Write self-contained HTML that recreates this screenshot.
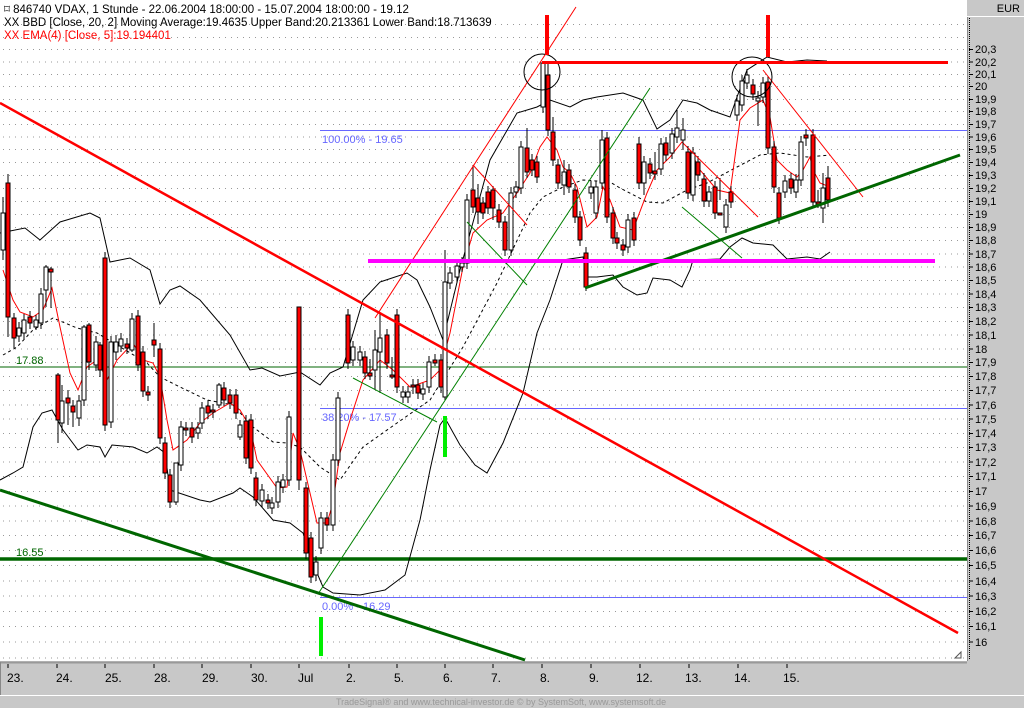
<!DOCTYPE html>
<html><head><meta charset="utf-8"><style>
html,body{margin:0;padding:0;background:#fff;}
body{width:1024px;height:708px;overflow:hidden;position:relative;font-family:"Liberation Sans",Arial,sans-serif;}
svg{position:absolute;left:0;top:0;}
text{font-family:"Liberation Sans",Arial,sans-serif;}
</style></head><body>
<svg width="1024" height="708" viewBox="0 0 1024 708">
<rect x="0" y="0" width="1024" height="708" fill="#fff"/>
<!-- right axis bg -->
<rect x="967" y="0" width="57" height="662" fill="#c8c8c8"/>
<line x1="967.5" y1="0" x2="967.5" y2="662" stroke="#888" stroke-width="1"/>
<rect x="967" y="0" width="57" height="16" fill="#c8c8c8"/>
<line x1="967" y1="16.5" x2="1024" y2="16.5" stroke="#fff"/>
<text x="1020" y="12" font-size="11" text-anchor="end" fill="#000">EUR</text>
<line x1="969.5" y1="18" x2="969.5" y2="660" stroke="#000" stroke-dasharray="1,1"/>
<!-- grid -->
<g stroke="#999" stroke-width="1" stroke-dasharray="1,5">
<line x1="3" y1="24.5" x2="967" y2="24.5"/><line x1="3" y1="37.5" x2="967" y2="37.5"/>
<line x1="3" y1="49.5" x2="967" y2="49.5"/><line x1="3" y1="62" x2="967" y2="62"/><line x1="3" y1="74.5" x2="967" y2="74.5"/><line x1="3" y1="86.5" x2="967" y2="86.5"/><line x1="3" y1="99.5" x2="967" y2="99.5"/><line x1="3" y1="111.5" x2="967" y2="111.5"/><line x1="3" y1="124.5" x2="967" y2="124.5"/><line x1="3" y1="137" x2="967" y2="137"/><line x1="3" y1="149.5" x2="967" y2="149.5"/><line x1="3" y1="162.5" x2="967" y2="162.5"/><line x1="3" y1="175.5" x2="967" y2="175.5"/><line x1="3" y1="188.5" x2="967" y2="188.5"/><line x1="3" y1="201.5" x2="967" y2="201.5"/><line x1="3" y1="214.5" x2="967" y2="214.5"/><line x1="3" y1="227.5" x2="967" y2="227.5"/><line x1="3" y1="240.5" x2="967" y2="240.5"/><line x1="3" y1="254" x2="967" y2="254"/><line x1="3" y1="267" x2="967" y2="267"/><line x1="3" y1="280.5" x2="967" y2="280.5"/><line x1="3" y1="294" x2="967" y2="294"/><line x1="3" y1="307.5" x2="967" y2="307.5"/><line x1="3" y1="321.5" x2="967" y2="321.5"/><line x1="3" y1="335" x2="967" y2="335"/><line x1="3" y1="349" x2="967" y2="349"/><line x1="3" y1="362.5" x2="967" y2="362.5"/><line x1="3" y1="376.5" x2="967" y2="376.5"/><line x1="3" y1="390.5" x2="967" y2="390.5"/><line x1="3" y1="405" x2="967" y2="405"/><line x1="3" y1="419" x2="967" y2="419"/><line x1="3" y1="433.5" x2="967" y2="433.5"/><line x1="3" y1="447.5" x2="967" y2="447.5"/><line x1="3" y1="462" x2="967" y2="462"/><line x1="3" y1="476.5" x2="967" y2="476.5"/><line x1="3" y1="491.5" x2="967" y2="491.5"/><line x1="3" y1="506" x2="967" y2="506"/><line x1="3" y1="521" x2="967" y2="521"/><line x1="3" y1="535.5" x2="967" y2="535.5"/><line x1="3" y1="550.5" x2="967" y2="550.5"/><line x1="3" y1="565.5" x2="967" y2="565.5"/><line x1="3" y1="581" x2="967" y2="581"/><line x1="3" y1="596" x2="967" y2="596"/><line x1="3" y1="611.5" x2="967" y2="611.5"/><line x1="3" y1="626.5" x2="967" y2="626.5"/><line x1="3" y1="642" x2="967" y2="642"/><line x1="3" y1="658" x2="967" y2="658"/>
</g>
<!-- axis labels -->
<g font-size="11" fill="#000">
<g stroke="#000"><line x1="969" y1="49.5" x2="973" y2="49.5"/><line x1="969" y1="62" x2="973" y2="62"/><line x1="969" y1="74.5" x2="973" y2="74.5"/><line x1="969" y1="86.5" x2="973" y2="86.5"/><line x1="969" y1="99.5" x2="973" y2="99.5"/><line x1="969" y1="111.5" x2="973" y2="111.5"/><line x1="969" y1="124.5" x2="973" y2="124.5"/><line x1="969" y1="137" x2="973" y2="137"/><line x1="969" y1="149.5" x2="973" y2="149.5"/><line x1="969" y1="162.5" x2="973" y2="162.5"/><line x1="969" y1="175.5" x2="973" y2="175.5"/><line x1="969" y1="188.5" x2="973" y2="188.5"/><line x1="969" y1="201.5" x2="973" y2="201.5"/><line x1="969" y1="214.5" x2="973" y2="214.5"/><line x1="969" y1="227.5" x2="973" y2="227.5"/><line x1="969" y1="240.5" x2="973" y2="240.5"/><line x1="969" y1="254" x2="973" y2="254"/><line x1="969" y1="267" x2="973" y2="267"/><line x1="969" y1="280.5" x2="973" y2="280.5"/><line x1="969" y1="294" x2="973" y2="294"/><line x1="969" y1="307.5" x2="973" y2="307.5"/><line x1="969" y1="321.5" x2="973" y2="321.5"/><line x1="969" y1="335" x2="973" y2="335"/><line x1="969" y1="349" x2="973" y2="349"/><line x1="969" y1="362.5" x2="973" y2="362.5"/><line x1="969" y1="376.5" x2="973" y2="376.5"/><line x1="969" y1="390.5" x2="973" y2="390.5"/><line x1="969" y1="405" x2="973" y2="405"/><line x1="969" y1="419" x2="973" y2="419"/><line x1="969" y1="433.5" x2="973" y2="433.5"/><line x1="969" y1="447.5" x2="973" y2="447.5"/><line x1="969" y1="462" x2="973" y2="462"/><line x1="969" y1="476.5" x2="973" y2="476.5"/><line x1="969" y1="491.5" x2="973" y2="491.5"/><line x1="969" y1="506" x2="973" y2="506"/><line x1="969" y1="521" x2="973" y2="521"/><line x1="969" y1="535.5" x2="973" y2="535.5"/><line x1="969" y1="550.5" x2="973" y2="550.5"/><line x1="969" y1="565.5" x2="973" y2="565.5"/><line x1="969" y1="581" x2="973" y2="581"/><line x1="969" y1="596" x2="973" y2="596"/><line x1="969" y1="611.5" x2="973" y2="611.5"/><line x1="969" y1="626.5" x2="973" y2="626.5"/><line x1="969" y1="642" x2="973" y2="642"/></g>
<text x="975" y="53">20,3</text><text x="975" y="66">20,2</text><text x="975" y="78">20,1</text><text x="975" y="90">20</text><text x="975" y="103">19,9</text><text x="975" y="115">19,8</text><text x="975" y="128">19,7</text><text x="975" y="141">19,6</text><text x="975" y="153">19,5</text><text x="975" y="166">19,4</text><text x="975" y="179">19,3</text><text x="975" y="192">19,2</text><text x="975" y="205">19,1</text><text x="975" y="218">19</text><text x="975" y="231">18,9</text><text x="975" y="244">18,8</text><text x="975" y="258">18,7</text><text x="975" y="271">18,6</text><text x="975" y="284">18,5</text><text x="975" y="298">18,4</text><text x="975" y="311">18,3</text><text x="975" y="325">18,2</text><text x="975" y="339">18,1</text><text x="975" y="353">18</text><text x="975" y="366">17,9</text><text x="975" y="380">17,8</text><text x="975" y="394">17,7</text><text x="975" y="409">17,6</text><text x="975" y="423">17,5</text><text x="975" y="437">17,4</text><text x="975" y="451">17,3</text><text x="975" y="466">17,2</text><text x="975" y="480">17,1</text><text x="975" y="495">17</text><text x="975" y="510">16,9</text><text x="975" y="525">16,8</text><text x="975" y="539">16,7</text><text x="975" y="554">16,6</text><text x="975" y="569">16,5</text><text x="975" y="585">16,4</text><text x="975" y="600">16,3</text><text x="975" y="615">16,2</text><text x="975" y="630">16,1</text><text x="975" y="646">16</text>
</g>
<!-- bottom axis -->
<rect x="0" y="661" width="967" height="34" fill="#c8c8c8"/>
<rect x="967" y="661" width="57" height="34" fill="#c8c8c8"/>
<line x1="0" y1="662.5" x2="967" y2="662.5" stroke="#999" stroke-width="2"/>
<line x1="0.5" y1="662" x2="0.5" y2="695" stroke="#888"/>
<line x1="0" y1="695.5" x2="1024" y2="695.5" stroke="#fff"/>
<rect x="0" y="696" width="1024" height="12" fill="#c8c8c8"/>
<path d="M955 658L961 652V658Z" fill="#fff" stroke="#555"/>
<g stroke="#000"><path d="M8 664V668M57 664V668M105 664V668M154 664V668M202 664V668M251 664V668M299 664V668M349 664V668M397 664V668M445 664V668M493 664V668M542 664V668M591 664V668M640 664V668M689 664V668M738 664V668M787 664V668"/></g>
<g font-size="12" fill="#000">
<text x="7" y="682">23.</text><text x="56" y="682">24.</text><text x="105" y="682">25.</text><text x="154" y="682">28.</text><text x="202" y="682">29.</text><text x="251" y="682">30.</text><text x="298" y="682">Jul</text><text x="346" y="682">2.</text><text x="394" y="682">5.</text><text x="443" y="682">6.</text><text x="491" y="682">7.</text><text x="540" y="682">8.</text><text x="589" y="682">9.</text><text x="636" y="682">12.</text><text x="685" y="682">13.</text><text x="734" y="682">14.</text><text x="783" y="682">15.</text>
</g>
<text x="336" y="705" font-size="9" fill="#999">TradeSignal® and www.technical-investor.de © by  SystemSoft, www.systemsoft.de</text>

<!-- horizontal reference lines -->
<line x1="0" y1="367" x2="967" y2="367" stroke="#006600" stroke-width="1"/>
<line x1="0" y1="559" x2="967" y2="559" stroke="#006600" stroke-width="3.5"/>
<line x1="320" y1="130.5" x2="967" y2="130.5" stroke="#6666ff" stroke-width="1"/>
<line x1="320" y1="408.5" x2="967" y2="408.5" stroke="#6666ff" stroke-width="1"/>
<line x1="320" y1="597.5" x2="967" y2="597.5" stroke="#6666ff" stroke-width="1"/>
<g font-size="11" fill="#6666ff">
<text x="322" y="143">100.00% - 19.65</text>
<text x="322" y="421">38.20% - 17.57</text>
<text x="322" y="610">0.00% - 16.29</text>
</g>
<g font-size="11" fill="#006600"><text x="16" y="364">17.88</text><text x="16" y="556">16.55</text></g>

<!-- bollinger bands -->
<g fill="none" stroke="#000" stroke-width="1">
<polyline points="0,233 25,228 40,240 60,222 90,213 100,218 110,262 130,258 150,270 160,304 170,290 180,286 200,300 230,335 250,370 262,368 280,376 300,372 320,385 330,373 343,367 363,300 380,282 407,273 417,280 430,307 443,340 460,270 475,215 490,160 517,113 537,107 550,100 570,107 583,100 597,97 623,93 643,100 657,129 670,120 683,100 697,103 710,110 730,117 737,97 747,70 767,57 787,62 807,60 827,61"/>
<polyline points="0,480 13,473 23,467 33,427 42,413 52,410 63,430 78,450 87,445 100,447 105,457 112,445 133,447 147,453 157,447 165,453 170,490 200,500 210,502 233,493 240,488 253,497 267,513 273,520 290,523 303,533 317,573 323,587 333,593 360,595 385,590 405,575 420,520 430,470 440,425 445,418 460,445 475,465 487,473 503,443 523,393 537,333 550,300 563,260 583,257 587,277 597,277 613,275 623,287 637,295 647,293 653,278 670,280 682,287 690,270 693,260 720,259 730,247 742,238 753,243 773,245 787,259 807,257 820,259 830,252"/>
<polyline stroke-dasharray="3,3" points="3,355 17,347 33,330 53,318 77,328 97,333 147,363 160,377 180,387 207,400 233,405 253,427 273,442 287,443 300,447 320,467 340,480 363,447 397,423 430,400 463,347 497,283 530,213 543,197 563,187 583,180 610,182 620,188 647,202 663,203 687,190 707,183 737,167 760,155 780,153 807,157 830,155"/>
</g>
<!-- EMA -->
<polyline fill="none" stroke="#ff0000" stroke-width="1" points="3,270 13,300 20,312 33,317 43,310 52,288 60,327 70,373 78,390 87,367 97,360 107,380 117,360 133,343 143,360 153,363 160,377 167,420 173,450 187,440 200,423 213,413 230,403 240,410 250,427 257,460 277,488 287,487 293,433 300,450 310,493 317,523 327,523 333,503 340,453 350,420 363,380 380,360 393,370 410,387 430,380 440,370 450,333 463,267 473,233 487,220 503,213 517,193 530,173 540,147 547,137 557,150 563,167 570,173 577,187 587,227 597,217 603,187 610,200 620,227 633,230 647,193 657,170 670,157 682,142 690,150 700,170 717,190 730,193 740,120 750,108 763,100 770,117 777,160 787,170 797,177 803,170 810,157 813,170 820,183 830,187"/>

<!-- candles wicks -->
<path fill="none" stroke="#000" stroke-width="1" d="M3 197V260M8 174V337M14 313V348M19 322V342M24 314V339M30 311V329M36 315V330M41 288V329M46 265V307M51 267V308M58 373V443M62 385V433M68 390V425M73 400V427M79 395V426M84 325V406M89 323V370M96 336V371M100 342V377M105 252V431M111 336V428M116 335V360M121 333V352M127 338V354M132 313V352M138 310V371M143 346V397M148 386V401M154 323V357M160 343V444M165 437V479M170 469V508M176 463V505M181 421V471M186 422V436M192 422V443M198 422V439M202 402V429M208 400V419M213 404V418M219 383V408M224 382V406M230 389V409M236 389V419M240 420V440M246 415V464M251 414V474M256 472V506M262 484V507M268 494V509M272 497V514M278 476V508M283 474V493M289 411V486M299 307V490M306 482V559M311 532V583M316 556V581M321 512V554M327 512V531M333 454V531M338 392V466M348 309V369M353 341V366M360 346V366M365 351V379M370 359V380M375 330V390M380 313V393M387 329V369M392 357V379M397 309V393M403 386V403M408 386V403M413 379V394M418 379V399M423 383V400M429 356V393M435 354V366M441 354V393M445 250V400M450 267V289M457 260V283M462 257V272M467 194V269M473 165V213M478 184V224M483 197V219M488 186V214M493 186V220M499 204V228M505 216V256M511 187V256M516 181V198M521 141V194M527 128V178M532 154V176M537 156V183M543 63V113M548 63V136M553 117V166M558 159V189M564 160V195M569 164V193M575 184V223M580 211V246M586 247V291M591 181V199M596 181V219M602 130V189M607 132V223M613 207V244M617 232V249M623 239V256M628 214V253M634 212V246M639 137V189M644 156V195M650 158V179M655 152V180M661 138V175M666 137V161M672 128V159M677 110V143M683 118V150M688 146V199M693 147V201M698 156V181M704 173V207M709 186V207M715 181V219M720 178V200M726 199V233M731 186V208M737 95V121M742 75V111M747 69V89M753 79V100M758 91V126M763 77V103M768 76V154M774 141V193M779 187V224M785 175V198M791 173V194M796 174V198M801 136V186M806 129V146M813 129V208M818 190V208M823 173V223M828 166V207"/>
<!-- red bodies -->
<g fill="#ff0000" stroke="#000" stroke-width="1">
<rect x="6" y="183" width="4" height="134"/><rect x="12" y="318" width="4" height="20"/><rect x="28" y="317" width="4" height="6"/><rect x="49" y="269" width="4" height="3"/><rect x="56" y="375" width="4" height="45"/><rect x="66" y="398" width="4" height="5"/><rect x="71" y="406" width="4" height="6"/><rect x="87" y="325" width="4" height="37"/><rect x="98" y="345" width="4" height="25"/><rect x="103" y="258" width="4" height="167"/><rect x="125" y="344" width="4" height="4"/><rect x="136" y="316" width="4" height="49"/><rect x="141" y="352" width="4" height="39"/><rect x="146" y="392" width="4" height="3"/><rect x="152" y="340" width="4" height="5"/><rect x="158" y="349" width="4" height="89"/><rect x="163" y="443" width="4" height="30"/><rect x="168" y="475" width="4" height="27"/><rect x="184" y="428" width="4" height="2"/><rect x="190" y="428" width="4" height="9"/><rect x="206" y="406" width="4" height="7"/><rect x="211" y="410" width="4" height="2"/><rect x="222" y="388" width="4" height="12"/><rect x="228" y="395" width="4" height="8"/><rect x="234" y="395" width="4" height="18"/><rect x="244" y="421" width="4" height="37"/><rect x="249" y="420" width="4" height="48"/><rect x="254" y="478" width="4" height="22"/><rect x="266" y="500" width="4" height="3"/><rect x="297" y="307" width="4" height="173"/><rect x="304" y="488" width="4" height="65"/><rect x="309" y="538" width="4" height="39"/><rect x="325" y="518" width="4" height="7"/><rect x="346" y="315" width="4" height="48"/><rect x="363" y="357" width="4" height="16"/><rect x="368" y="373" width="4" height="3"/><rect x="385" y="335" width="4" height="28"/><rect x="390" y="375" width="4" height="2"/><rect x="395" y="315" width="4" height="72"/><rect x="411" y="385" width="4" height="2"/><rect x="416" y="385" width="4" height="8"/><rect x="433" y="360" width="4" height="3"/><rect x="439" y="360" width="4" height="27"/><rect x="471" y="190" width="4" height="17"/><rect x="476" y="198" width="4" height="14"/><rect x="481" y="203" width="4" height="10"/><rect x="486" y="192" width="4" height="16"/><rect x="491" y="190" width="4" height="18"/><rect x="497" y="210" width="4" height="12"/><rect x="503" y="222" width="4" height="28"/><rect x="525" y="148" width="4" height="24"/><rect x="530" y="160" width="4" height="10"/><rect x="535" y="162" width="4" height="15"/><rect x="546" y="75" width="4" height="55"/><rect x="551" y="132" width="4" height="28"/><rect x="556" y="165" width="4" height="18"/><rect x="567" y="170" width="4" height="17"/><rect x="573" y="190" width="4" height="27"/><rect x="578" y="217" width="4" height="23"/><rect x="584" y="253" width="4" height="34"/><rect x="605" y="138" width="4" height="79"/><rect x="611" y="213" width="4" height="25"/><rect x="615" y="238" width="4" height="5"/><rect x="621" y="245" width="4" height="5"/><rect x="632" y="218" width="4" height="22"/><rect x="637" y="144" width="4" height="39"/><rect x="648" y="164" width="4" height="9"/><rect x="653" y="171" width="4" height="3"/><rect x="664" y="143" width="4" height="12"/><rect x="686" y="152" width="4" height="41"/><rect x="696" y="162" width="4" height="13"/><rect x="702" y="179" width="4" height="22"/><rect x="713" y="187" width="4" height="26"/><rect x="718" y="213" width="4" height="2"/><rect x="729" y="192" width="4" height="10"/><rect x="751" y="85" width="4" height="9"/><rect x="766" y="82" width="4" height="66"/><rect x="772" y="147" width="4" height="40"/><rect x="777" y="193" width="4" height="25"/><rect x="789" y="179" width="4" height="9"/><rect x="804" y="135" width="4" height="3"/><rect x="811" y="135" width="4" height="67"/><rect x="816" y="202" width="4" height="2"/><rect x="826" y="178" width="4" height="22"/>
</g>
<!-- white bodies -->
<g fill="#fff" stroke="#000" stroke-width="1">
<rect x="1" y="213" width="4" height="37"/><rect x="17" y="328" width="4" height="8"/><rect x="22" y="320" width="4" height="13"/><rect x="34" y="320" width="4" height="7"/><rect x="39" y="294" width="4" height="29"/><rect x="44" y="267" width="4" height="23"/><rect x="60" y="401" width="4" height="22"/><rect x="77" y="401" width="4" height="17"/><rect x="82" y="327" width="4" height="73"/><rect x="94" y="342" width="4" height="23"/><rect x="109" y="342" width="4" height="80"/><rect x="114" y="342" width="4" height="10"/><rect x="119" y="339" width="4" height="7"/><rect x="130" y="319" width="4" height="31"/><rect x="174" y="463" width="4" height="39"/><rect x="179" y="427" width="4" height="38"/><rect x="196" y="428" width="4" height="5"/><rect x="200" y="408" width="4" height="15"/><rect x="217" y="385" width="4" height="20"/><rect x="238" y="425" width="4" height="12"/><rect x="260" y="490" width="4" height="11"/><rect x="270" y="503" width="4" height="5"/><rect x="276" y="482" width="4" height="20"/><rect x="281" y="480" width="4" height="7"/><rect x="287" y="417" width="4" height="63"/><rect x="314" y="562" width="4" height="13"/><rect x="319" y="518" width="4" height="30"/><rect x="331" y="460" width="4" height="65"/><rect x="336" y="398" width="4" height="62"/><rect x="351" y="347" width="4" height="13"/><rect x="358" y="352" width="4" height="8"/><rect x="373" y="350" width="4" height="20"/><rect x="378" y="338" width="4" height="14"/><rect x="401" y="392" width="4" height="5"/><rect x="406" y="392" width="4" height="5"/><rect x="421" y="389" width="4" height="5"/><rect x="427" y="362" width="4" height="25"/><rect x="443" y="282" width="4" height="115"/><rect x="448" y="273" width="4" height="10"/><rect x="455" y="266" width="4" height="11"/><rect x="460" y="263" width="4" height="4"/><rect x="465" y="200" width="4" height="63"/><rect x="509" y="193" width="4" height="57"/><rect x="514" y="187" width="4" height="5"/><rect x="519" y="147" width="4" height="41"/><rect x="541" y="63" width="4" height="44"/><rect x="562" y="172" width="4" height="13"/><rect x="589" y="187" width="4" height="6"/><rect x="594" y="187" width="4" height="26"/><rect x="600" y="140" width="4" height="43"/><rect x="626" y="220" width="4" height="27"/><rect x="642" y="162" width="4" height="21"/><rect x="659" y="144" width="4" height="25"/><rect x="670" y="134" width="4" height="19"/><rect x="675" y="128" width="4" height="9"/><rect x="681" y="130" width="4" height="10"/><rect x="691" y="153" width="4" height="42"/><rect x="707" y="192" width="4" height="9"/><rect x="724" y="205" width="4" height="22"/><rect x="735" y="101" width="4" height="14"/><rect x="740" y="81" width="4" height="24"/><rect x="745" y="75" width="4" height="8"/><rect x="756" y="98" width="4" height="3"/><rect x="761" y="83" width="4" height="14"/><rect x="783" y="181" width="4" height="11"/><rect x="794" y="180" width="4" height="12"/><rect x="799" y="142" width="4" height="38"/><rect x="821" y="188" width="4" height="20"/>
</g>

<!-- trend lines thin -->
<g fill="none" stroke-width="1">
<line x1="375" y1="318" x2="576" y2="7" stroke="#ff0000"/>
<line x1="473" y1="165" x2="527" y2="225" stroke="#ff0000"/>
<line x1="688" y1="148" x2="758" y2="217" stroke="#ff0000"/>
<line x1="763" y1="70" x2="863" y2="197" stroke="#ff0000"/>
<line x1="318" y1="594" x2="650" y2="88" stroke="#008000"/>
<line x1="353" y1="378" x2="437" y2="422" stroke="#008000"/>
<line x1="467" y1="222" x2="527" y2="285" stroke="#008000"/>
<line x1="682" y1="207" x2="742" y2="258" stroke="#008000"/>
<circle cx="542" cy="72" r="18" stroke="#000"/>
<circle cx="752" cy="77" r="20" stroke="#000"/>
</g>
<!-- thick lines -->
<line x1="0" y1="103" x2="958" y2="633" stroke="#ff0000" stroke-width="2.5"/>
<line x1="0" y1="490" x2="525" y2="660" stroke="#006600" stroke-width="3"/>
<line x1="585" y1="288" x2="960" y2="155" stroke="#006600" stroke-width="3"/>
<line x1="368" y1="261" x2="935" y2="261" stroke="#ff00ff" stroke-width="4"/>
<line x1="542" y1="62.5" x2="948" y2="62.5" stroke="#ff0000" stroke-width="3"/>
<line x1="547" y1="15" x2="547" y2="55" stroke="#ff0000" stroke-width="4"/>
<line x1="768" y1="15" x2="768" y2="57" stroke="#ff0000" stroke-width="4"/>
<line x1="445" y1="416" x2="445" y2="457" stroke="#00ee00" stroke-width="4"/>
<line x1="321" y1="617" x2="321" y2="656" stroke="#00ee00" stroke-width="4"/>

<!-- titles -->
<rect x="2" y="2" width="300" height="40" fill="#fff" opacity="0"/>
<g font-size="11.5">
<text x="4" y="13" fill="#000">⌑ 846740  VDAX, 1 Stunde - 22.06.2004 18:00:00 - 15.07.2004 18:00:00 - 19.12</text>
<text x="4" y="26" fill="#000">XX BBD [Close, 20, 2] Moving Average:19.4635 Upper Band:20.213361 Lower Band:18.713639</text>
<text x="4" y="39" fill="#ff0000">XX EMA(4) [Close, 5]:19.194401</text>
</g>
</svg>
</body></html>
